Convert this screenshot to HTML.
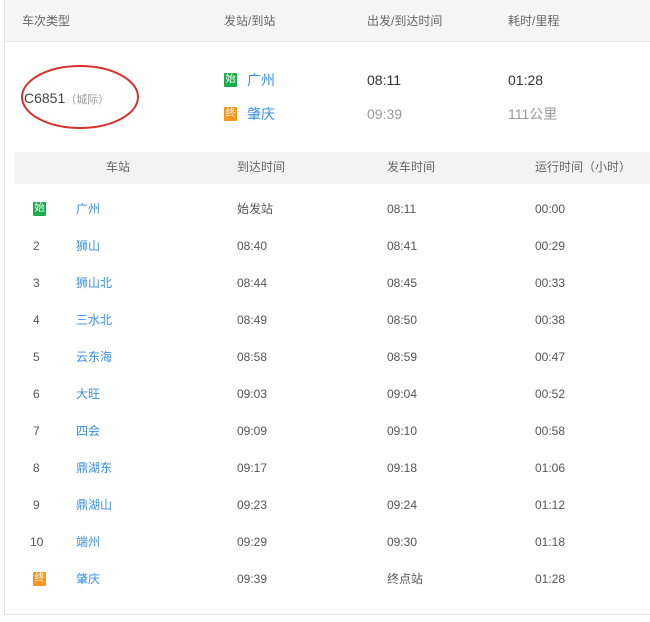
<!DOCTYPE html>
<html><head><meta charset="utf-8"><style>
body{margin:0;width:650px;height:622px;background:#fff;font-family:"Liberation Sans","Noto Sans CJK SC",sans-serif;color:#555;font-size:12px;position:relative;overflow:hidden}
.a{position:absolute;white-space:nowrap;line-height:16px}
.b{position:absolute;width:13px;height:14px;color:#fff;font-size:10px;line-height:14px;text-align:center;border-radius:1px}
.g{background:#1aad4b}.o{background:#f7951d}
.bl{color:#3a8ee6}
</style></head><body>
<div class="a" style="left:4px;top:0;width:646px;height:41px;background:#f5f5f5;border-bottom:1px solid #e8e8e8;border-left:1px solid #e4e4e4"></div>
<div class="a" style="left:4px;top:41px;width:1px;height:574px;background:#e4e4e4"></div>
<div class="a" style="left:4px;top:614px;width:646px;height:1px;background:#e4e4e4"></div>
<div class="a" style="left:22px;top:13px;color:#666">车次类型</div>
<div class="a" style="left:224px;top:13px;color:#666">发站/到站</div>
<div class="a" style="left:367px;top:13px;color:#666">出发/到达时间</div>
<div class="a" style="left:508px;top:13px;color:#666">耗时/里程</div>
<svg class="a" style="left:20px;top:63px" width="124" height="70"><ellipse cx="60" cy="34" rx="58" ry="31" fill="none" stroke="#d9302c" stroke-width="2"/></svg>
<div class="a" style="left:24px;top:90px;font-size:14px;color:#444">C6851<span style="font-size:11px;color:#999">（城际）</span></div>
<div class="b g" style="left:224px;top:73px">始</div><div class="a bl" style="left:247px;top:72px;font-size:14px">广州</div>
<div class="b o" style="left:224px;top:107px">终</div><div class="a bl" style="left:247px;top:106px;font-size:14px">肇庆</div>
<div class="a" style="left:367px;top:72px;font-size:14px;color:#333">08:11</div>
<div class="a" style="left:367px;top:106px;font-size:14px;color:#999">09:39</div>
<div class="a" style="left:508px;top:72px;font-size:14px;color:#333">01:28</div>
<div class="a" style="left:508px;top:106px;font-size:14px;color:#999">111公里</div>
<div class="a" style="left:14px;top:152px;width:636px;height:32px;background:#f3f3f3"></div>
<div class="a" style="left:106px;top:159px;color:#666">车站</div>
<div class="a" style="left:237px;top:159px;color:#666">到达时间</div>
<div class="a" style="left:387px;top:159px;color:#666">发车时间</div>
<div class="a" style="left:535px;top:159px;color:#666">运行时间（小时）</div>
<div class="b g" style="left:33px;top:202px">始</div><div class="a bl" style="left:76px;top:201px">广州</div><div class="a" style="left:237px;top:201px">始发站</div><div class="a" style="left:387px;top:201px">08:11</div><div class="a" style="left:535px;top:201px">00:00</div>
<div class="a" style="left:33px;top:238px">2</div><div class="a bl" style="left:76px;top:238px">狮山</div><div class="a" style="left:237px;top:238px">08:40</div><div class="a" style="left:387px;top:238px">08:41</div><div class="a" style="left:535px;top:238px">00:29</div>
<div class="a" style="left:33px;top:275px">3</div><div class="a bl" style="left:76px;top:275px">狮山北</div><div class="a" style="left:237px;top:275px">08:44</div><div class="a" style="left:387px;top:275px">08:45</div><div class="a" style="left:535px;top:275px">00:33</div>
<div class="a" style="left:33px;top:312px">4</div><div class="a bl" style="left:76px;top:312px">三水北</div><div class="a" style="left:237px;top:312px">08:49</div><div class="a" style="left:387px;top:312px">08:50</div><div class="a" style="left:535px;top:312px">00:38</div>
<div class="a" style="left:33px;top:349px">5</div><div class="a bl" style="left:76px;top:349px">云东海</div><div class="a" style="left:237px;top:349px">08:58</div><div class="a" style="left:387px;top:349px">08:59</div><div class="a" style="left:535px;top:349px">00:47</div>
<div class="a" style="left:33px;top:386px">6</div><div class="a bl" style="left:76px;top:386px">大旺</div><div class="a" style="left:237px;top:386px">09:03</div><div class="a" style="left:387px;top:386px">09:04</div><div class="a" style="left:535px;top:386px">00:52</div>
<div class="a" style="left:33px;top:423px">7</div><div class="a bl" style="left:76px;top:423px">四会</div><div class="a" style="left:237px;top:423px">09:09</div><div class="a" style="left:387px;top:423px">09:10</div><div class="a" style="left:535px;top:423px">00:58</div>
<div class="a" style="left:33px;top:460px">8</div><div class="a bl" style="left:76px;top:460px">鼎湖东</div><div class="a" style="left:237px;top:460px">09:17</div><div class="a" style="left:387px;top:460px">09:18</div><div class="a" style="left:535px;top:460px">01:06</div>
<div class="a" style="left:33px;top:497px">9</div><div class="a bl" style="left:76px;top:497px">鼎湖山</div><div class="a" style="left:237px;top:497px">09:23</div><div class="a" style="left:387px;top:497px">09:24</div><div class="a" style="left:535px;top:497px">01:12</div>
<div class="a" style="left:30px;top:534px">10</div><div class="a bl" style="left:76px;top:534px">端州</div><div class="a" style="left:237px;top:534px">09:29</div><div class="a" style="left:387px;top:534px">09:30</div><div class="a" style="left:535px;top:534px">01:18</div>
<div class="b o" style="left:33px;top:572px">终</div><div class="a bl" style="left:76px;top:571px">肇庆</div><div class="a" style="left:237px;top:571px">09:39</div><div class="a" style="left:387px;top:571px">终点站</div><div class="a" style="left:535px;top:571px">01:28</div>
</body></html>
